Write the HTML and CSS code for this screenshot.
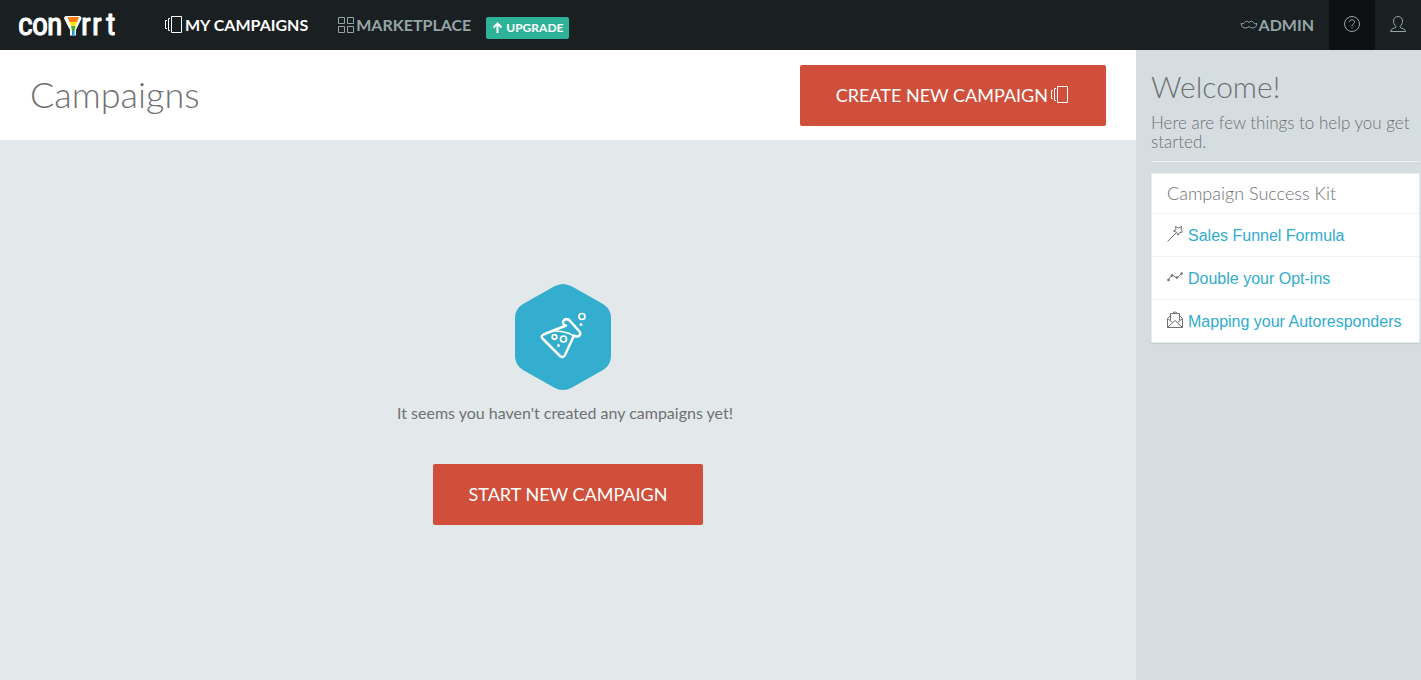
FILE: index.html
```html
<!DOCTYPE html>
<html lang="en">
<head>
<meta charset="utf-8">
<meta name="viewport" content="width=device-width, initial-scale=1">
<title>Campaigns</title>
<link rel="stylesheet" href="styles.css">
</head>
<body>
<svg class="defs" aria-hidden="true">
  <symbol id="albums" viewBox="0 0 20 20"><path d="M7.500 1.500h10v16h-10zM6 3.500H4.500v12H6M3 5.500H1.500v8H3"/></symbol>
</svg>
<header class="navbar">
  <a class="logo" href="#" aria-label="convrrt">
    <svg width="120" height="50" viewBox="0 0 120 50">
      <text class="logo-text" y="35"><tspan x="18">c</tspan><tspan x="32">o</tspan><tspan x="47">n</tspan><tspan x="81">r</tspan><tspan x="92">r</tspan><tspan x="106">t</tspan></text>
      <path fill="#fff" d="M64 18.500q0-2.500 2.500-2.500h12.500q2.500 0 2.500 2.500L76 30v5.500h-6V30z"/>
      <path fill="#ff7a0f" d="M67.500 17h11.500l-2 5h-7.500z"/>
      <path fill="#ffe21a" d="M69.500 22h7.500l-1.500 4h-4.500z"/>
      <path fill="#3faf2c" d="M71 26h4.500l-1 5h-2.500z"/>
      <path fill="#1798f0" d="M72 31h2.500v4.500h-2.500z"/>
    </svg>
  </a>
  <nav class="menu">
    <a class="menu-link active" href="#"><svg class="icon" width="20" height="20"><use href="#albums"/></svg><span>MY CAMPAIGNS</span></a>
    <a class="menu-link market" href="#"><svg class="icon" width="18" height="18" viewBox="0 0 18 18"><path d="M1.500 1.500h6v6h-6zM10.500 1.500h6v6h-6zM1.500 10.500h6v6h-6zM10.500 10.500h6v6h-6z"/></svg><span>MARKETPLACE</span></a>
    <a class="upgrade" href="#"><svg class="icon arrow" width="11" height="12" viewBox="0 0 11 12"><path d="M5.500 11V1.500M1.500 5.500l4-4 4 4"/></svg><span>UPGRADE</span></a>
  </nav>
  <nav class="account">
    <a class="menu-link admin" href="#"><svg class="icon" width="18" height="12" viewBox="0 0 18 12"><path d="M9 3.500C7.500 2 5.500 1.800 4.500 3.500 3.500 5 2.500 5 1 4.500 1.500 7.500 3 9 5.500 9 7 9 8 8.500 9 7.500 10 8.500 11 9 12.500 9 15 9 16.500 7.500 17 4.500 15.500 5 14.500 5 13.500 3.500 12.500 1.800 10.500 2 9 3.500z"/></svg><span>ADMIN</span></a>
    <a class="square help" href="#" aria-label="Help"><svg class="icon" width="18" height="18" viewBox="0 0 18 18"><circle cx="9" cy="9" r="7.500"/><path d="M6.500 7.200c0-3.200 5-3.200 5 0C11.500 9 9 8.800 9 11M9 12.300v1.400"/></svg></a>
    <a class="square" href="#" aria-label="Profile"><svg class="icon" width="18" height="18" viewBox="0 0 18 18"><path d="M7 11.500C5 9.500 4.500 8 4.500 6c0-6 9-6 9 0 0 2-.5 3.500-2.500 5.500v.8c1 .9 5.500 1.200 5.500 4.200h-15c0-3 4.500-3.300 5.500-4.200z"/></svg></a>
  </nav>
</header>
<div class="page">
  <main class="main">
    <div class="title-bar">
      <h1>Campaigns</h1>
      <button class="button" type="button">CREATE NEW CAMPAIGN<svg class="icon" width="20" height="20"><use href="#albums"/></svg></button>
    </div>
    <section class="empty">
      <svg class="hexagon" width="96" height="106" viewBox="0 0 96 106" aria-hidden="true">
        <path fill="#33aecf" d="M39 2.500Q48-2.500 57 2.500L88 20Q96 25 96 34V72Q96 81 88 86L57 103.500Q48 108.500 39 103.500L8 86Q0 81 0 72V34Q0 25 8 20z"/>
        <g fill="none" stroke="#fff" stroke-width="2.500" stroke-linecap="round" stroke-linejoin="round">
          <path d="M51 41.500L28.500 50.500Q25.500 52 27.500 54.500L45 72Q48 74.500 50 71L59 51.500Q62 53.500 64.500 51.500 66 49.500 64.500 47.500L56 38Q52.500 33.500 49 36 46.500 39 50 41.500"/>
          <path stroke-width="1.600" d="M38 47q6 0 11 1 6 1 9.500 4"/>
          <g stroke-width="1.700"><circle cx="39.500" cy="53" r="2.300"/><circle cx="48.500" cy="55" r="3"/><circle cx="67" cy="32.500" r="3"/></g>
        </g>
        <g fill="#fff"><circle cx="43.500" cy="61.500" r="1.500"/><circle cx="66" cy="40.500" r="1.500"/></g>
      </svg>
      <p class="message">It seems you haven't created any campaigns yet!</p>
      <button class="button" type="button">START NEW CAMPAIGN</button>
    </section>
  </main>
  <aside class="sidebar">
    <h2>Welcome!</h2>
    <p class="intro">Here are few things to help you get started.</p>
    <section class="kit">
      <h3>Campaign Success Kit</h3>
      <ul>
        <li><svg class="icon" width="16" height="18" viewBox="0 0 16 18"><path d="M.5 16.500L9 8M8.500 1.500l3 1.500 3-1.500-.5 3.500 1.500 2-3 .7-1.500 2.500-1.500-3L6.500 6l2.500-1.500z"/></svg><a href="#">Sales Funnel Formula</a></li>
        <li><svg class="icon" width="16" height="18" viewBox="0 0 16 18"><path d="M1 12l4-5 5 3 5-5"/><g class="dots"><circle cx="1.500" cy="12" r="1.300"/><circle cx="5" cy="7.500" r="1.300"/><circle cx="10" cy="9.500" r="1.300"/><circle cx="14.700" cy="5.500" r="1.300"/></g></svg><a href="#">Double your Opt-ins</a></li>
        <li><svg class="icon" width="16" height="18" viewBox="0 0 16 18"><path d="M3.500 9.500v-7h9v7M6 2.500q0-1.500 2-1.500t2 1.500M3.500 4.500l-3 3v9h15v-9l-3-3M.5 7.500l5 4M15.500 7.500l-5 4M.8 16.200L8 9.500l7.200 6.700"/></svg><a href="#">Mapping your Autoresponders</a></li>
      </ul>
    </section>
  </aside>
</div>
</body>
</html>
```
FILE: styles.css
```css
* { box-sizing: border-box; }
body {
  margin: 0;
  min-height: 100vh;
  display: flex;
  flex-direction: column;
  font-family: Lato, sans-serif;
  font-size: 16px;
  color: #6f7172;
  background: #e3e8ea;
}
h1, h2, h3, p, ul { margin: 0; padding: 0; font-weight: 300; }
a { text-decoration: none; }
.defs { display: none; }
.icon { flex: none; fill: none; stroke: currentColor; }
.navbar { display: flex; height: 50px; background: #1a1f21; }
.logo { width: 164px; }
.logo svg { display: block; }
.logo-text { font-family: "Liberation Sans Narrow", "Roboto Condensed", "DejaVu Sans Condensed", sans-serif; font-size: 32px; fill: #fff; stroke: #fff; stroke-linejoin: round; }
.menu, .account { display: flex; align-items: center; }
.account { margin-left: auto; align-self: stretch; }
.menu-link { display: flex; align-items: center; font-size: 16px; font-weight: 700; color: #95a5a6; }
.menu-link span, .upgrade span { padding-bottom: 2px; }
.active { color: #fff; }
.market { margin-left: 29px; }
.upgrade { display: flex; align-items: center; gap: 3px; height: 22px; margin: 6px 0 0 15px; padding: 0 6px; border-radius: 2px; background: #2fb398; color: #fff; font-size: 12px; font-weight: 700; }
.arrow { stroke-width: 2; }
.menu-link svg { margin-right: 1px; }
.admin { margin-right: 15px; }
.square { display: flex; align-items: center; justify-content: center; width: 46px; height: 50px; padding-bottom: 2px; color: #95a5a6; }
.help { background: #0d1011; }
.page { flex: 1; display: grid; grid-template-columns: minmax(0, 1fr) 285px; }
.title-bar { display: flex; align-items: center; justify-content: space-between; padding: 15px 30px 14px; background: #fff; }
h1 { padding-bottom: 4px; font-size: 36px; }
.button { display: flex; align-items: center; gap: 2px; height: 61px; padding: 0 36px 2px; border: 0; border-radius: 2px; background: #cf4f3b; color: #fff; font-family: inherit; font-size: 18px; cursor: pointer; }
.empty { display: flex; flex-direction: column; align-items: center; padding-top: 144px; }
.hexagon { margin-right: 10px; }
.message { margin: 11px 6px 39px 0; line-height: 24px; font-weight: 400; }
.sidebar { padding: 19px 1px 20px 15px; background: #d5dde0; }
h2 { font-size: 30px; line-height: 34px; }
.intro { margin-top: 10px; padding-bottom: 10px; border-bottom: 1px solid #edf1f2; font-size: 17px; line-height: 19px; }
.kit { margin-top: 11px; border: 1px solid #e6ebed; background: #fff; box-shadow: 0 1px 1px #c3cccf; }
h3 { padding: 0 15px; font-size: 18px; line-height: 39px; }
ul { list-style: none; }
li { display: flex; align-items: center; gap: 5px; height: 43px; padding: 0 15px; border-top: 1px solid #f0f2f3; font-family: "Liberation Sans", Arial, sans-serif; }
li a { padding-top: 2px; color: #2faccf; white-space: nowrap; }
li svg { margin-bottom: 2px; }
.dots { fill: currentColor; stroke: none; }
```
